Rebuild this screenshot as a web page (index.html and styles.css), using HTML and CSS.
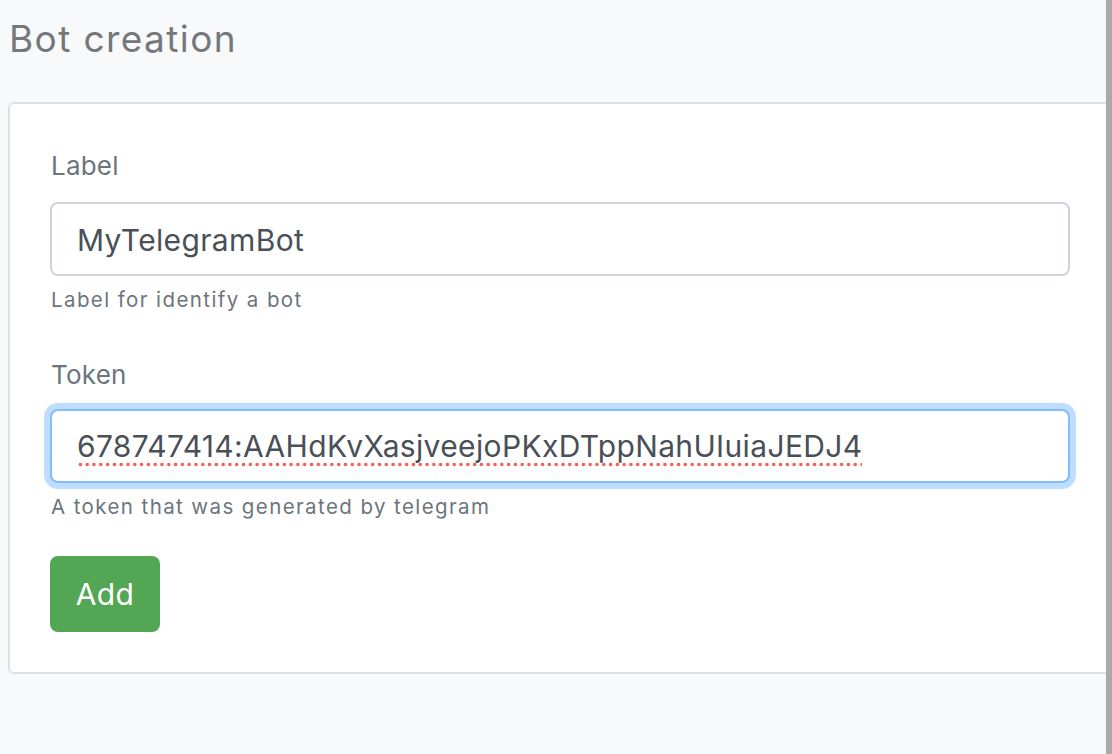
FILE: index.html
```html
<!DOCTYPE html>
<html lang="en">
<head>
<meta charset="utf-8">
<title>Bot creation</title>
<link rel="stylesheet" href="styles.css">
</head>
<body>
<main class="page">
  <h1 class="title">Bot creation</h1>
  <form class="card">
    <div class="group">
      <label class="label" for="label">Label</label>
      <input class="control" id="label" type="text" value="MyTelegramBot">
      <small class="help">Label for identify a bot</small>
    </div>
    <div class="group group-token">
      <label class="label" for="token">Token</label>
      <div class="control control-focus" id="token" role="textbox" aria-label="Token"><span class="misspelled">678747414:AAHdKvXasjveejoPKxDTppNahUIuiaJEDJ4</span></div>
      <small class="help">A token that was generated by telegram</small>
    </div>
    <button class="btn" type="button">Add</button>
  </form>
</main>
<div class="scrollbar"></div>
</body>
</html>
```
FILE: styles.css
```css
html, body {
  margin: 0;
  padding: 0;
}
body {
  background: #f8f9fa;
  font-family: Inter, "Noto Sans", sans-serif;
  width: 1112px;
  height: 754px;
  overflow: hidden;
}
.page {
  padding: 0 0 0 8px;
}
.title {
  margin: 0;
  padding: 15px 0 0 1px;
  font-size: 37px;
  line-height: 48px;
  font-weight: 400;
  letter-spacing: 1.4px;
  color: #75787b;
  height: 86px;
  box-sizing: border-box;
}
.card {
  margin: 16px 0 0 0;
  background: #fff;
  border: 2px solid #dfe0e1;
  border-radius: 6px;
  padding: 36px 40px 40px;
  display: flex;
  flex-direction: column;
  align-items: flex-start;
}
.group {
  display: flex;
  flex-direction: column;
  width: 1020px;
  margin-bottom: 30px;
}
.group-token {
  margin-bottom: 27px;
}
.label {
  font-size: 26px;
  line-height: 40px;
  color: #6c757d;
  margin: 0 0 16px 1px;
  padding-top: 6px;
  letter-spacing: 0.2px;
}
.group-token .label {
  padding-top: 11px;
  margin-bottom: 14px;
}
.control {
  box-sizing: border-box;
  width: 1020px;
  height: 74px;
  border: 2px solid #ced4da;
  border-radius: 8px;
  padding: 2px 25px 0;
  font-family: inherit;
  font-size: 30px;
  line-height: 70px;
  letter-spacing: 0.35px;
  color: #495057;
  background: #fff;
  outline: none;
}
.control-focus {
  display: flex;
  align-items: center;
  border-color: #80bdff;
  box-shadow: 0 0 0 6px rgba(0, 123, 255, 0.25);
  white-space: nowrap;
}
.misspelled {
  line-height: 36px;
  padding-bottom: 3px;
  background-image: radial-gradient(circle, #ee6457 1.6px, transparent 2.1px);
  background-size: 6.8px 5px;
  background-repeat: repeat-x;
  background-position: 0 100%;
}
.help {
  font-size: 20.5px;
  line-height: 28px;
  margin-top: 10px;
  margin-left: 1px;
  color: #6c757d;
  letter-spacing: 1.4px;
}
.btn {
  width: 110px;
  height: 76px;
  margin-top: 8px;
  background: #53a653;
  border: none;
  border-radius: 8px;
  color: #fff;
  font-family: inherit;
  font-size: 30px;
  letter-spacing: 0.3px;
  padding: 0;
}
.scrollbar {
  position: fixed;
  top: 0;
  right: 0;
  width: 6px;
  height: 754px;
  background: #aaaaaa;
}
```
